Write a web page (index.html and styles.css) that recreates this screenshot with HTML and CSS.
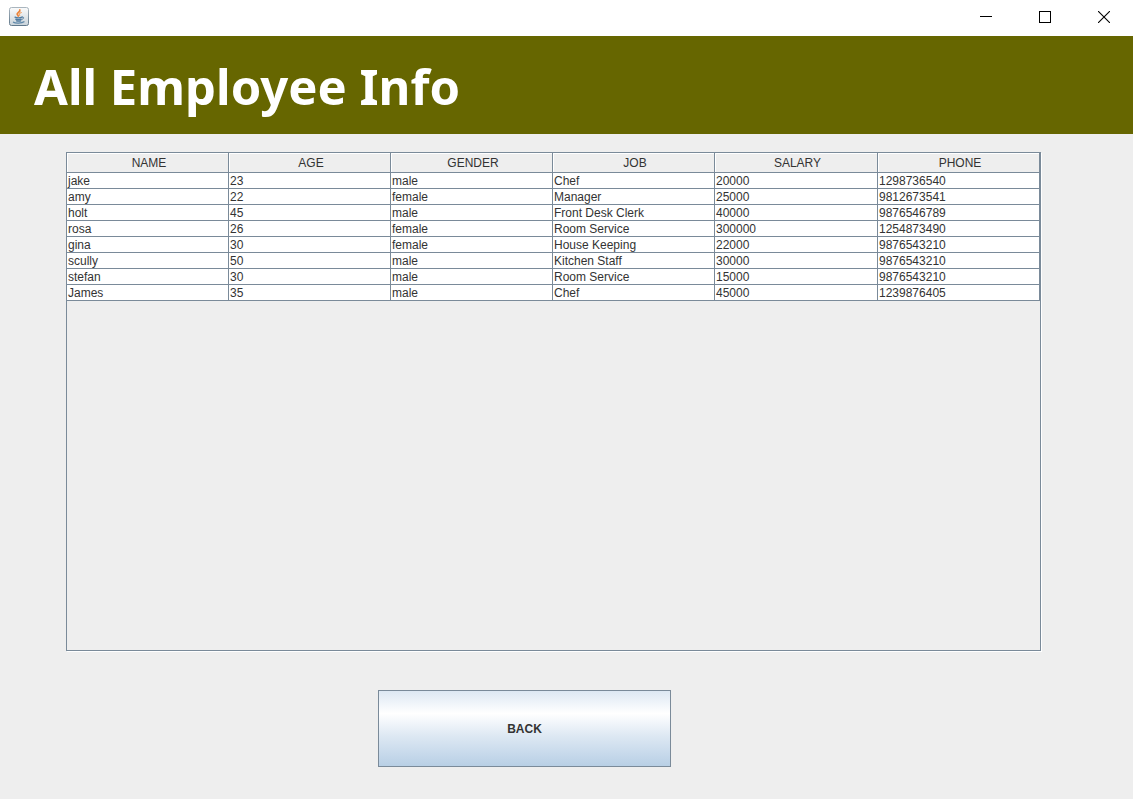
FILE: index.html
```html
<!DOCTYPE html>
<html lang="en">
<head>
<meta charset="utf-8">
<title>All Employee Info</title>
<link rel="stylesheet" href="styles.css">
</head>
<body>
<div class="titlebar">
  <svg class="app-icon" width="20" height="20" viewBox="0 0 20 20" aria-hidden="true">
    <defs>
      <linearGradient id="tile" x1="0" y1="0" x2="0" y2="1"><stop offset="0" stop-color="#fbfbfb"/><stop offset="1" stop-color="#c9d3da"/></linearGradient>
      <linearGradient id="edge" x1="0" y1="0" x2="0" y2="1"><stop offset="0" stop-color="#a9b5be"/><stop offset="1" stop-color="#60788b"/></linearGradient>
    </defs>
    <rect x="0.5" y="0.5" width="19" height="18" rx="2" fill="url(#tile)" stroke="url(#edge)"/>
    <g fill="none" stroke-linecap="round">
      <path d="M10.800 3c.9 2-3.200 2.800-2.600 4.300.2.700 1 1 1 1.800" stroke="#ec8238" stroke-width="1.700"/>
      <path d="M12.300 5.500c-1.900.8-2.400 1.600-1.600 3" stroke="#f2a76c" stroke-width="1.200"/>
      <path d="M6 10.200c2 .7 5 .7 7 0M6.700 12.200c1.800.6 4 .6 5.600 0M7.500 13.800c1.400.5 3 .5 4.300 0" stroke="#507a9f" stroke-width="1.300"/>
      <path d="M13.300 9.900c2-.3 1.900 2-.2 2.400" stroke="#507a9f"/>
      <path d="M4.500 15.200c1.500 1.300 8.500 1.300 10.500-.4" stroke="#5f88a9" stroke-width="1.300"/>
    </g>
  </svg>
  <div class="window-controls">
    <button class="window-button" type="button" aria-label="Minimize"><svg width="12" height="12" viewBox="0 0 12 12" shape-rendering="crispEdges"><path d="M0 5h12v1H0z"/></svg></button>
    <button class="window-button" type="button" aria-label="Maximize"><svg width="12" height="12" viewBox="0 0 12 12" shape-rendering="crispEdges"><path d="M.5.5h11v11H.5z" fill="none" stroke="#000"/></svg></button>
    <button class="window-button" type="button" aria-label="Close"><svg width="12" height="12" viewBox="0 0 12 12"><path d="M0 0l12 12M12 0L0 12" fill="none" stroke="#000" stroke-width="1.100"/></svg></button>
  </div>
</div>
<header class="banner"><h1 class="banner-title">All Employee Info</h1></header>
<main class="content">
  <div class="table-pane">
    <table class="employees">
      <colgroup><col><col><col><col><col class="col-salary"><col></colgroup>
      <thead><tr><th scope="col">NAME</th><th scope="col">AGE</th><th scope="col">GENDER</th><th scope="col">JOB</th><th scope="col">SALARY</th><th scope="col">PHONE</th></tr></thead>
      <tbody>
        <tr><td>jake</td><td>23</td><td>male</td><td>Chef</td><td>20000</td><td>1298736540</td></tr>
        <tr><td>amy</td><td>22</td><td>female</td><td>Manager</td><td>25000</td><td>9812673541</td></tr>
        <tr><td>holt</td><td>45</td><td>male</td><td>Front Desk Clerk</td><td>40000</td><td>9876546789</td></tr>
        <tr><td>rosa</td><td>26</td><td>female</td><td>Room Service</td><td>300000</td><td>1254873490</td></tr>
        <tr><td>gina</td><td>30</td><td>female</td><td>House Keeping</td><td>22000</td><td>9876543210</td></tr>
        <tr><td>scully</td><td>50</td><td>male</td><td>Kitchen Staff</td><td>30000</td><td>9876543210</td></tr>
        <tr><td>stefan</td><td>30</td><td>male</td><td>Room Service</td><td>15000</td><td>9876543210</td></tr>
        <tr><td>James</td><td>35</td><td>male</td><td>Chef</td><td>45000</td><td>1239876405</td></tr>
      </tbody>
    </table>
  </div>
  <div class="actions"><button class="back-button" type="button">BACK</button></div>
</main>
</body>
</html>
```
FILE: styles.css
```css
* {
  box-sizing: border-box;
}

body {
  display: flex;
  flex-direction: column;
  min-height: 100vh;
  margin: 0;
  background: #eeeeee;
  color: #333333;
  font: 12px/13px "Liberation Sans", Arial, sans-serif;
}

.titlebar {
  display: flex;
  align-items: center;
  justify-content: space-between;
  height: 36px;
  padding-left: 9px;
  padding-bottom: 2px;
  background: #ffffff;
}

.window-controls {
  display: flex;
  gap: 1px;
}

.window-button {
  display: flex;
  align-items: center;
  justify-content: center;
  width: 58px;
  height: 34px;
  padding: 0;
  border: 0;
  background: transparent;
}

.banner {
  display: flex;
  align-items: center;
  height: 98px;
  padding: 2px 34px 0;
  background: #666600;
}

.banner-title {
  margin: 0;
  color: #ffffff;
  font: bold 49px/60px Tahoma, "Noto Sans", sans-serif;
}

.content {
  display: flex;
  flex: 1;
  flex-direction: column;
  padding: 18px 92px 32px 66px;
}

.table-pane {
  flex: 1;
  border: 1px solid #7a8a99;
  box-shadow: 1px 1px 0 #ffffff;
}

.employees {
  width: 100%;
  border-spacing: 0;
  table-layout: fixed;
}

.col-salary {
  width: 163px;
}

.employees th,
.employees td {
  border: solid #7a8a99;
  border-width: 0 1px 1px 0;
}

.employees th {
  height: 20px;
  padding: 3px 0 1px 3px;
  box-shadow: inset 1px 1px 0 #ffffff;
  font-weight: normal;
  text-align: center;
}

.employees td {
  height: 16px;
  padding: 2px 1px 0;
  background: #ffffff;
}

.actions {
  display: flex;
  padding: 39px 0 0 312px;
}

.back-button {
  width: 293px;
  height: 77px;
  padding: 2px 0 0;
  border: 1px solid #7a8a99;
  background: linear-gradient(#dde8f3 0%, #ffffff 30%, #dde8f3 60%, #b8cfe5 100%);
  color: #333333;
  font: bold 12px/15px "Liberation Sans", Arial, sans-serif;
}
```
